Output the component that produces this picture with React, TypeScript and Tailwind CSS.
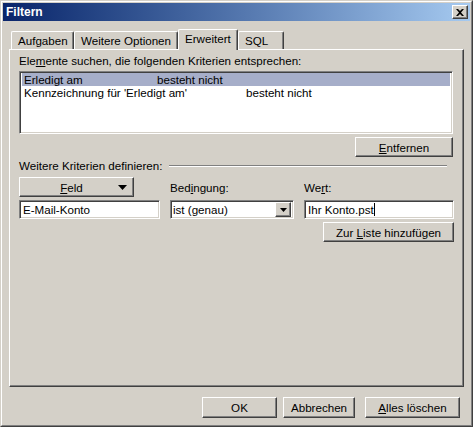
import React from 'react'

const raised =
  'border border-t-white border-l-white border-r-[#404040] border-b-[#404040] bg-[#d4d0c8] shadow-[inset_-1px_-1px_0_#808080]'
const sunken =
  'border border-t-[#808080] border-l-[#808080] border-r-white border-b-white bg-white shadow-[inset_1px_1px_0_#404040,inset_-1px_-1px_0_#d4d0c8]'

function Btn({ className = '', children }: { className?: string; children: React.ReactNode }) {
  return (
    <div className={`${raised} flex items-center justify-center text-black ${className}`}>
      {children}
    </div>
  )
}

function Tab({ label, active, className = '' }: { label: string; active?: boolean; className?: string }) {
  return (
    <div
      className={`border-t border-l border-r border-t-white border-l-white border-r-[#404040] rounded-t-[2px] shadow-[inset_-1px_0_0_#808080] bg-[#d4d0c8] flex pl-[6px] ${
        active ? 'relative z-10 h-[21px] -mb-[1px] pt-[2px]' : 'h-[18px] pt-[2px]'
      } ${className}`}
    >
      {label}
    </div>
  )
}

function DownArrow({ w = 7, h = 4 }: { w?: number; h?: number }) {
  return (
    <svg width={w} height={h} viewBox={`0 0 ${w} ${h}`}>
      <path d={`M0 0h${w}L${w / 2} ${h}z`} fill="#000" />
    </svg>
  )
}

export default function App() {
  return (
    <div className="w-[473px] h-[427px] font-['Liberation_Sans',Arial,sans-serif] text-[11.6px] text-black leading-[13px] select-none">
      <div className="w-full h-full border border-t-[#d4d0c8] border-l-[#d4d0c8] border-r-[#404040] border-b-[#404040]">
        <div className="w-full h-full border border-t-white border-l-white border-r-[#808080] border-b-[#808080] bg-[#d4d0c8] p-[1px] flex flex-col">
          {/* title bar */}
          <div className="h-[18px] bg-linear-to-r from-[#0a246a] to-[#a6caf0] flex items-center justify-between pl-[3px] pr-[2px]">
            <span className="text-white font-bold text-[12px]">Filtern</span>
            <div className={`${raised} w-[16px] h-[14px] flex items-center justify-center`}>
              <svg width="8" height="7" viewBox="0 0 8 7">
                <path d="M0 0h2l2 2 2-2h2L5 3.5 8 7H6L4 5 2 7H0l3-3.5z" fill="#000" />
              </svg>
            </div>
          </div>

          {/* tabs */}
          <div className="mt-[8px] h-[20px] flex items-end pl-[8px]">
            <Tab label="Aufgaben" className="w-[63px]" />
            <Tab label="Weitere Optionen" className="w-[104px]" />
            <Tab label="Erweitert" active className="w-[60px]" />
            <Tab label="SQL" className="w-[46px]" />
          </div>

          {/* panel */}
          <div className="ml-[6px] w-[455px] h-[338px] border border-t-white border-l-white border-r-[#404040] border-b-[#404040] shadow-[inset_-1px_-1px_0_#808080] pl-[9px]">
            <div className="mt-[4px]">
              Ele<u>m</u>ente suchen, die folgenden Kriterien entsprechen:
            </div>
            <div className={`${sunken} mt-[4px] w-[434px] h-[63px] p-[2px] pt-[1px]`}>
              <div className="h-[13px] bg-[#a6aec9] flex">
                <span className="pl-[2px] w-[135px]">Erledigt am</span>
                <span>besteht nicht</span>
              </div>
              <div className="h-[13px] flex">
                <span className="pl-[2px] w-[224px] whitespace-nowrap">Kennzeichnung für 'Erledigt am'</span>
                <span>besteht nicht</span>
              </div>
            </div>
            <div className="flex justify-end w-[434px] mt-[3px]">
              <Btn className="w-[98px] h-[20px]">
                <span>
                  <u>E</u>ntfernen
                </span>
              </Btn>
            </div>
            <div className="mt-[2px] flex items-center w-[428px]">
              <span>Weitere Kriterien definieren:</span>
              <div className="flex-1 ml-[6px] border-t border-t-[#808080] border-b border-b-white" />
            </div>

            <div className="mt-[5px] flex">
              {/* field column */}
              <div className="w-[141px] mr-[10px]">
                <Btn className="w-[115px] h-[20px] relative">
                  <span className="pr-[10px]">
                    <u>F</u>eld
                  </span>
                  <span className="absolute right-[6px] top-[7px] flex">
                    <DownArrow w={9} h={5} />
                  </span>
                </Btn>
                <div className={`${sunken} mt-[3px] h-[19px] px-[3px] flex items-center`}>E-Mail-Konto</div>
              </div>
              {/* condition column */}
              <div className="w-[124px] mr-[10px]">
                <div className="h-[20px] flex items-center pt-[1px]">
                  Bed<u>i</u>ngung:
                </div>
                <div className={`${sunken} mt-[3px] h-[19px] pl-[2px] p-[2px] flex items-center justify-between`}>
                  <span>ist (genau)</span>
                  <div className={`${raised} w-[16px] h-[15px] flex items-center justify-center`}>
                    <DownArrow />
                  </div>
                </div>
              </div>
              {/* value column */}
              <div className="w-[150px]">
                <div className="h-[20px] flex items-center pt-[1px]">
                  We<u>r</u>t:
                </div>
                <div className={`${sunken} mt-[3px] h-[19px] px-[3px] flex items-center`}>
                  <span>Ihr Konto.pst</span>
                  <span className="inline-block w-[1px] h-[13px] bg-black" />
                </div>
                <div className="flex justify-end mt-[3px]">
                  <Btn className="w-[131px] h-[20px]">
                    <span>
                      Zur <u>L</u>iste hinzufügen
                    </span>
                  </Btn>
                </div>
              </div>
            </div>
          </div>

          {/* bottom buttons */}
          <div className="mt-[10px] flex pl-[199px] gap-[6px]">
            <Btn className="w-[75px] h-[21px]">OK</Btn>
            <Btn className="w-[72px] h-[21px]">Abbrechen</Btn>
            <Btn className="w-[95px] h-[21px] ml-[4px]">
              <span>
                <u>A</u>lles löschen
              </span>
            </Btn>
          </div>
        </div>
      </div>
    </div>
  )
}
